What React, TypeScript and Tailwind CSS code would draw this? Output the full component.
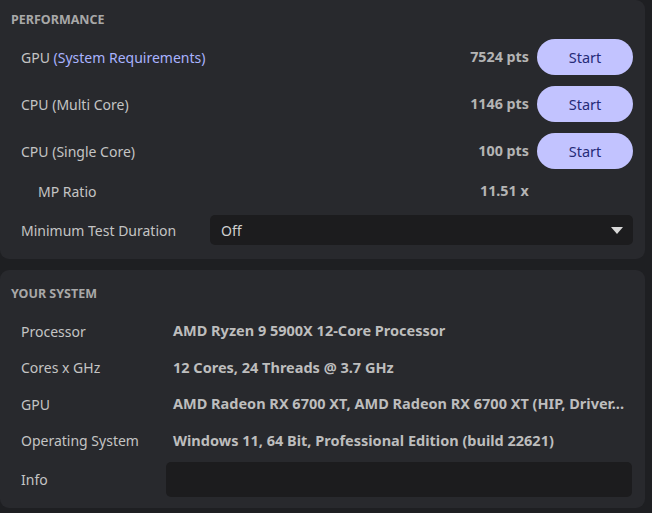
import React from "react";

const font = { fontFamily: '"Noto Sans", "Segoe UI", sans-serif' };

function StartButton() {
  return (
    <button className="w-[96px] h-[36px] rounded-full bg-[#c2c3ff] text-[#262b78] text-[14.5px] flex items-center justify-center pt-[2px]">
      Start
    </button>
  );
}

function PerfRow({ label, score }: { label: React.ReactNode; score: string }) {
  return (
    <div className="flex items-center h-[36px] pl-[21px]">
      <div className="flex-1 text-[#c4c4c4] text-[14px]">{label}</div>
      <div className="text-[#b4b4b4] text-[14.3px] font-bold mr-[8px]">{score}</div>
      <StartButton />
    </div>
  );
}

function SysRow({ label, value }: { label: string; value: string }) {
  return (
    <div className="flex items-center h-[36.5px] pl-[21px]">
      <div className="w-[152px] text-[#c4c4c4] text-[14px]">{label}</div>
      <div className="flex-1 min-w-0 text-[#bdbdbd] text-[14.5px] font-bold whitespace-nowrap">{value}</div>
    </div>
  );
}

export default function App() {
  return (
    <div className="w-[652px] h-[513px] bg-[#1e1f22] pr-[7px] flex flex-col gap-[11px] overflow-hidden" style={font}>
      <div className="h-[259px] bg-[#28292d] rounded-b-[9px] rounded-tr-[9px] pt-[9px] pr-[12px]">
        <div className="pl-[11px] h-[22px] flex items-center text-[#a8a8a8] text-[12.5px] font-bold">PERFORMANCE</div>
        <div className="mt-[8px] flex flex-col gap-[11px]">
          <PerfRow
            label={
              <>
                GPU <span className="text-[#a9b3ff]">(System Requirements)</span>
              </>
            }
            score="7524 pts"
          />
          <PerfRow label="CPU (Multi Core)" score="1146 pts" />
          <PerfRow label="CPU (Single Core)" score="100 pts" />
        </div>
        <div className="flex items-center h-[24px] mt-[10px] pl-[38px]">
          <div className="flex-1 text-[#c4c4c4] text-[14px]">MP Ratio</div>
          <div className="w-[153px] text-[#b4b4b4] text-[14.3px] font-bold">11.51 x</div>
        </div>
        <div className="flex items-center mt-[12px] pl-[21px]">
          <div className="w-[189px] text-[#c4c4c4] text-[14px]">Minimum Test Duration</div>
          <div className="flex-1 h-[30px] bg-[#1c1c1e] rounded-[5px] flex items-center pl-[11px] pr-[10px]">
            <span className="flex-1 text-[#d0d0d0] text-[14px]">Off</span>
            <svg width="12" height="7" viewBox="0 0 12 7">
              <path d="M0 0 L12 0 L6 7 Z" fill="#d8d8d8" />
            </svg>
          </div>
        </div>
      </div>
      <div className="h-[238px] bg-[#28292d] rounded-[9px] pt-[13px] pr-[13px]">
        <div className="pl-[11px] h-[22px] flex items-center text-[#a8a8a8] text-[12.5px] font-bold">YOUR SYSTEM</div>
        <div className="mt-[8px]">
          <SysRow label="Processor" value="AMD Ryzen 9 5900X 12-Core Processor" />
          <SysRow label="Cores x GHz" value="12 Cores, 24 Threads @ 3.7 GHz" />
          <SysRow label="GPU" value="AMD Radeon RX 6700 XT, AMD Radeon RX 6700 XT (HIP, Driver..." />
          <SysRow label="Operating System" value="Windows 11, 64 Bit, Professional Edition (build 22621)" />
        </div>
        <div className="flex items-center pl-[21px] mt-[3px]">
          <div className="w-[145px] text-[#c4c4c4] text-[14px]">Info</div>
          <div className="flex-1 h-[35px] bg-[#1c1c1e] rounded-[5px]" />
        </div>
      </div>
    </div>
  );
}
